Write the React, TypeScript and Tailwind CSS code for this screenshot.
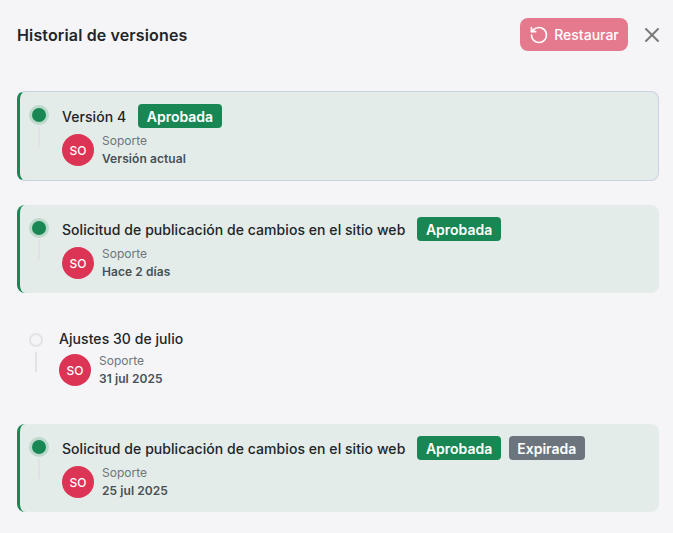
import { RotateCcw, X } from 'lucide-react'

interface Version {
  titulo: string
  fecha: string
  badges: { label: string; color: string }[]
  activa: boolean
  actual?: boolean
}

const VERSIONES: Version[] = [
  { titulo: 'Versión 4', fecha: 'Versión actual', activa: true, actual: true, badges: [{ label: 'Aprobada', color: 'bg-[#198754]' }] },
  { titulo: 'Solicitud de publicación de cambios en el sitio web', fecha: 'Hace 2 días', activa: true, badges: [{ label: 'Aprobada', color: 'bg-[#198754]' }] },
  { titulo: 'Ajustes 30 de julio', fecha: '31 jul 2025', activa: false, badges: [] },
  {
    titulo: 'Solicitud de publicación de cambios en el sitio web',
    fecha: '25 jul 2025',
    activa: true,
    badges: [
      { label: 'Aprobada', color: 'bg-[#198754]' },
      { label: 'Expirada', color: 'bg-[#6c757d]' },
    ],
  },
]

function Item({ v }: { v: Version }) {
  const box = v.activa
    ? 'bg-[#e3ece8] border-l-[3px] border-l-[#198754] rounded-lg'
    : ''
  const border = v.actual ? 'border-y border-r border-y-[#c9d1e3] border-r-[#c9d1e3]' : ''

  return (
    <div className={`flex gap-4 pl-3 pr-3 pt-3 pb-3.5 ${box} ${border}`}>
      <div className="flex w-[14px] shrink-0 flex-col items-center pt-1">
        {v.activa ? (
          <div className="h-[14px] w-[14px] rounded-full bg-[#198754] shadow-[0_0_0_3px_#bcd9cb]" />
        ) : (
          <div className="h-[14px] w-[14px] rounded-full border-2 border-[#e2e3e6]" />
        )}
        <div className="mt-[5px] h-5 w-0.5 bg-[#dfe2e4]" />
      </div>
      <div>
        <div className="flex items-center gap-3">
          <span className="text-[14px] leading-[19px] font-medium tracking-[0.06px] text-[#212529]">{v.titulo}</span>
          {v.badges.length > 0 && (
            <div className="flex gap-2">
              {v.badges.map(b => (
                <span key={b.label} className={`${b.color} flex h-6 items-center rounded px-[8.5px] text-[14px] font-semibold text-white`}>
                  {b.label}
                </span>
              ))}
            </div>
          )}
        </div>
        <div className="mt-1.5 flex items-center gap-2">
          <div className="flex h-8 w-8 items-center justify-center rounded-full bg-[#dc3454] pt-px text-[12px] font-medium text-white">SO</div>
          <div className="flex h-8 flex-col justify-center text-[12px]">
            <div className="leading-[15px] text-[#6c757d]">Soporte</div>
            <div className="mt-0.5 leading-[17px] font-semibold tracking-[0.08px] text-[#495057]">{v.fecha}</div>
          </div>
        </div>
      </div>
    </div>
  )
}

export default function App() {
  return (
    <div className="min-h-[533px] bg-[#f5f5f7] pl-[17px] pr-[14px] pt-[18px] font-['Inter',sans-serif]">
      <div className="-mr-[5px] flex items-center justify-between">
        <h1 className="text-[16px] font-semibold tracking-[0.14px] text-[#212529]">Historial de versiones</h1>
        <div className="flex items-center gap-3">
          <button className="flex h-[33px] w-[108px] items-center justify-center gap-[5px] rounded-lg bg-[#e57a8e] text-[14px] font-medium text-white">
            <RotateCcw size={20} strokeWidth={2} />
            Restaurar
          </button>
          <X size={24} strokeWidth={2} className="text-[#7a7a7a]" />
        </div>
      </div>
      <div className="mt-10 flex flex-col gap-6">
        {VERSIONES.map((v, i) => (
          <Item key={i} v={v} />
        ))}
      </div>
    </div>
  )
}
